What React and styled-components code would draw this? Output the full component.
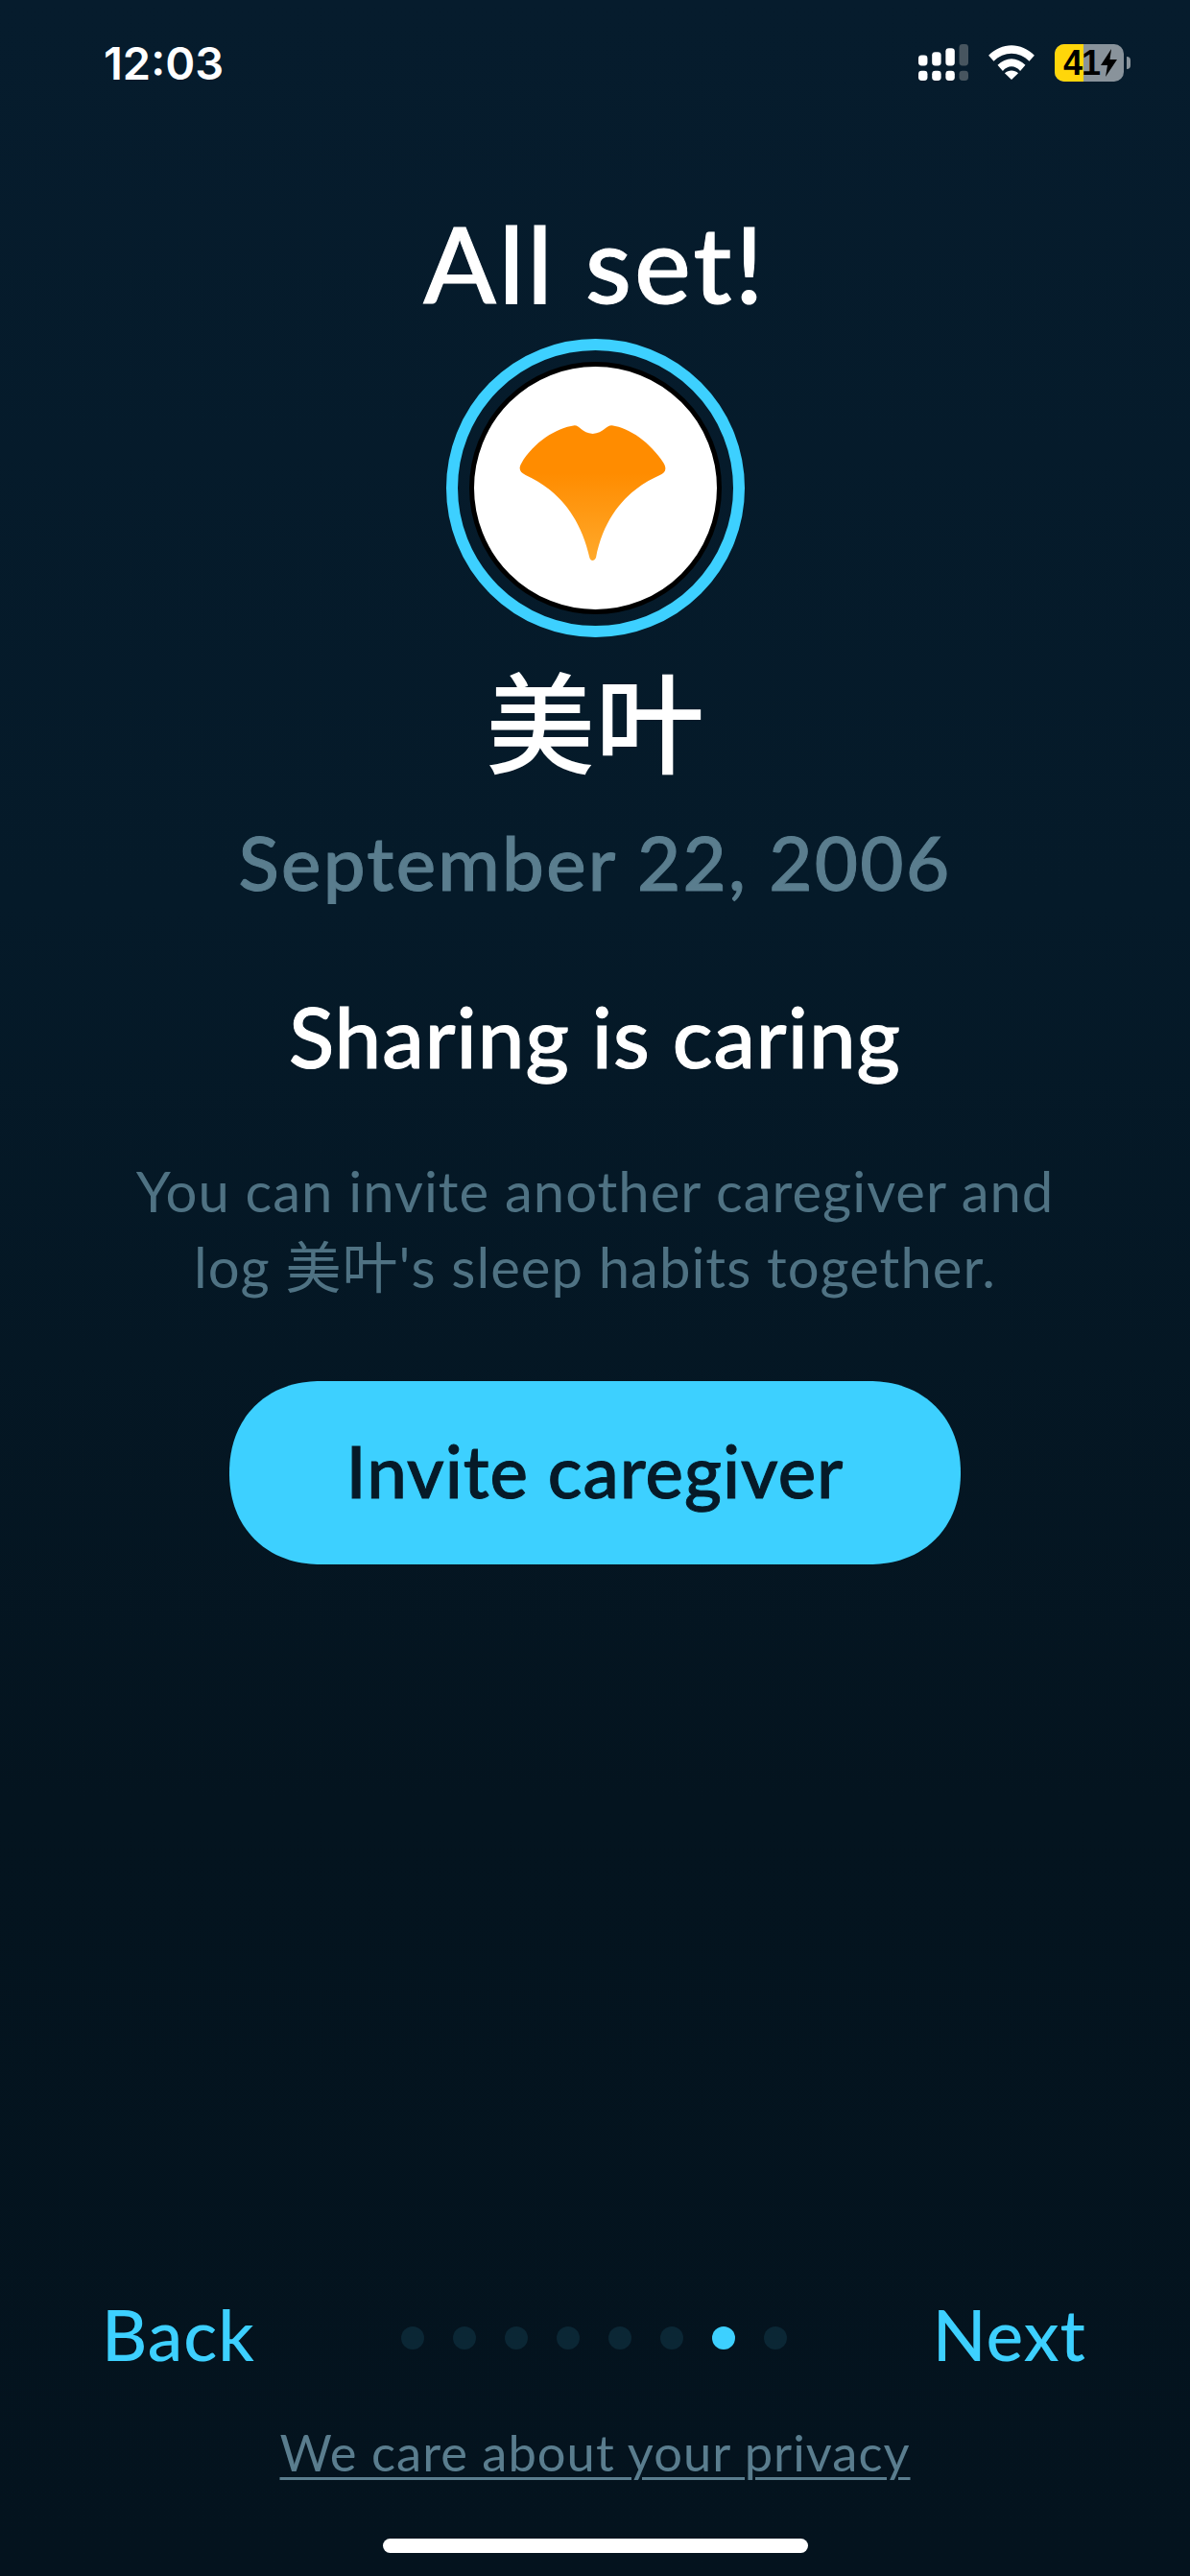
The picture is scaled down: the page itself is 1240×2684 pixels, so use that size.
import React from "react";
import styled, { createGlobalStyle } from "styled-components";

const accent = "#3dd0ff";
const muted = "#5a7d8e";

const GlobalStyle = createGlobalStyle`
  html, body {
    margin: 0;
    padding: 0;
    background: #04141f;
  }
  * {
    box-sizing: border-box;
  }
`;

const Screen = styled.div`
  width: 1240px;
  height: 2684px;
  display: flex;
  flex-direction: column;
  align-items: center;
  background: linear-gradient(180deg, #061c2d 0%, #051a29 35%, #04141f 70%, #04131e 100%);
  font-family: Lato, "Noto Sans CJK SC", sans-serif;
  overflow: hidden;
`;

const StatusBar = styled.div`
  width: 100%;
  height: 100px;
  padding: 38px 69px 0 108px;
  display: flex;
  align-items: flex-start;
  justify-content: space-between;
`;

const Clock = styled.div`
  font-family: Inter, sans-serif;
  font-size: 47px;
  font-weight: 600;
  line-height: 56px;
  color: #fff;
`;

const StatusIcons = styled.div`
  display: flex;
  align-items: center;
  height: 56px;
  margin-top: -1px;
`;

const Battery = styled.div`
  position: relative;
  width: 72px;
  height: 39px;
  margin-left: 21px;
  border-radius: 10px;
  background: #89939b;
  overflow: visible;
  display: flex;
  align-items: center;
  font-family: "Liberation Sans", sans-serif;
  font-size: 36px;
  font-weight: 700;
  color: #000;
  &::after {
    content: "";
    position: absolute;
    right: -7px;
    top: 13px;
    width: 4px;
    height: 13px;
    border-radius: 0 4px 4px 0;
    background: #89939b;
  }
`;

const BatteryFill = styled.div`
  position: absolute;
  left: 0;
  top: 0;
  bottom: 0;
  background: #ffd60a;
  border-radius: 10px 0 0 10px;
`;

const BatteryText = styled.span`
  position: relative;
  padding-left: 9px;
  letter-spacing: -1px;
  line-height: 39px;
`;

const BoltIcon = styled.svg`
  position: relative;
  margin-left: 1px;
`;

const Title = styled.h1`
  margin: 122px 0 0;
  font-size: 111px;
  font-weight: 500;
  line-height: 102px;
  letter-spacing: 3px;
  -webkit-text-stroke: 1px #fff;
  color: #fff;
`;

const AvatarRing = styled.div`
  width: 311px;
  height: 311px;
  margin-top: 29px;
  border-radius: 50%;
  border: 12px solid ${accent};
  display: flex;
  align-items: center;
  justify-content: center;
`;

const AvatarPhoto = styled.div`
  width: 263px;
  height: 263px;
  border-radius: 50%;
  border: 5px solid #000;
  background: #fff;
  display: flex;
`;

const ChildName = styled.div`
  margin-top: 19px;
  font-family: "Noto Sans CJK SC", sans-serif;
  font-size: 114px;
  font-weight: 500;
  line-height: 130px;
  color: #fff;
`;

const BirthDate = styled.div`
  margin-top: 42px;
  font-size: 78px;
  font-weight: 500;
  line-height: 86px;
  letter-spacing: 2.3px;
  -webkit-text-stroke: 1px ${muted};
  color: ${muted};
`;

const Heading = styled.h2`
  margin: 93px 0 0;
  font-size: 87px;
  font-weight: 500;
  line-height: 92px;
  letter-spacing: 1px;
  -webkit-text-stroke: 1px #fff;
  color: #fff;
`;

const Description = styled.p`
  margin: 76px 0 0;
  width: 1060px;
  text-align: center;
  font-size: 58px;
  font-weight: 400;
  line-height: 78.5px;
  letter-spacing: 1px;
  color: #4f7283;
`;

const InviteButton = styled.button`
  margin-top: 80px;
  width: 762px;
  height: 191px;
  padding-bottom: 6px;
  border: 0;
  border-radius: 95px;
  corner-shape: superellipse(1.1);
  background: ${accent};
  font-family: inherit;
  font-size: 74.5px;
  font-weight: 500;
  letter-spacing: 1px;
  -webkit-text-stroke: 1px #061a28;
  color: #061a28;
`;

const Footer = styled.div`
  margin-top: auto;
  width: 100%;
  display: flex;
  flex-direction: column;
  align-items: center;
`;

const NavRow = styled.div`
  width: 100%;
  padding: 0 108px 0 106px;
  display: flex;
  align-items: center;
  justify-content: space-between;
`;

const NavLink = styled.a`
  font-size: 73px;
  font-weight: 500;
  line-height: 84px;
  letter-spacing: 1px;
  color: ${accent};
`;

const Dots = styled.div`
  display: flex;
  gap: 30px;
  margin-top: 7px;
`;

const Dot = styled.span`
  width: 24px;
  height: 24px;
  border-radius: 50%;
  background: ${(p) => (p.$active ? accent : "#0b2735")};
`;

const PrivacyLink = styled.a`
  margin-top: 49px;
  font-size: 52.5px;
  font-weight: 400;
  line-height: 64px;
  letter-spacing: 1px;
  color: ${muted};
  text-decoration: underline;
  text-decoration-thickness: 3px;
  text-underline-offset: 6px;
`;

const HomeBar = styled.div`
  margin-top: 58px;
  margin-bottom: 24px;
  width: 443px;
  height: 15px;
  border-radius: 8px;
  background: #fff;
`;

const App = () => {
  const dots = [0, 1, 2, 3, 4, 5, 6, 7];
  return (
    <>
      <GlobalStyle />
      <Screen>
        <StatusBar>
          <Clock>12:03</Clock>
          <StatusIcons>
            <svg width="52" height="38" viewBox="82 56 154 112">
              <rect x="82" y="90" width="28" height="32" rx="10" fill="#fff" />
              <rect x="124" y="80" width="28" height="42" rx="10" fill="#fff" />
              <rect x="166" y="68" width="28" height="54" rx="10" fill="#fff" />
              <rect x="208" y="56" width="28" height="66" rx="10" fill="#47555f" />
              <rect x="82" y="138" width="28" height="30" rx="10" fill="#fff" />
              <rect x="124" y="138" width="28" height="30" rx="10" fill="#fff" />
              <rect x="166" y="138" width="28" height="30" rx="10" fill="#fff" />
              <rect x="208" y="138" width="28" height="30" rx="10" fill="#47555f" />
            </svg>
            <svg width="48" height="36" viewBox="300 58 142 107" style={{ marginLeft: 21 }}>
              <path
                d="M300 90 C340 48 402 48 442 90 L426 108 C395 76 347 76 316 108 Z"
                fill="#fff"
              />
              <path
                d="M328 120 C354 94 388 94 414 120 L398 138 C382 120 360 120 344 138 Z"
                fill="#fff"
              />
              <path d="M350 145 C362 134 380 134 392 145 L371 165 Z" fill="#fff" />
            </svg>
            <Battery>
              <BatteryFill style={{ width: "41%" }} />
              <BatteryText>41</BatteryText>
              <BoltIcon width="17" height="29" viewBox="0 0 17 29">
                <path d="M11 0 L0 17 H7 L5 29 L17 11 H9.5 Z" fill="#000" />
              </BoltIcon>
            </Battery>
          </StatusIcons>
        </StatusBar>
        <Title>All set!</Title>
        <AvatarRing>
          <AvatarPhoto>
            <svg width="253" height="253" viewBox="165 128 757 759">
              <defs>
                <linearGradient id="leaf" x1="0" y1="0" x2="0" y2="1">
                  <stop offset="0.35" stopColor="#ff8c00" />
                  <stop offset="1" stopColor="#ffa92b" />
                </linearGradient>
              </defs>
              <path
                d="M478 312 C495 312 500 335 535 338 C570 335 575 312 595 312 C650 320 715 365 757 430 C768 450 760 460 745 467 C670 500 575 570 545 725 C540 737 528 737 525 725 C495 590 420 510 325 467 C305 458 303 445 312 430 C350 365 420 320 478 312 Z"
                fill="url(#leaf)"
              />
            </svg>
          </AvatarPhoto>
        </AvatarRing>
        <ChildName>美叶</ChildName>
        <BirthDate>September 22, 2006</BirthDate>
        <Heading>Sharing is caring</Heading>
        <Description>
          You can invite another caregiver and
          <br />
          log 美叶's sleep habits together.
        </Description>
        <InviteButton>Invite caregiver</InviteButton>
        <Footer>
          <NavRow>
            <NavLink>Back</NavLink>
            <Dots>
              {dots.map((d) => (
                <Dot key={d} $active={d === 6} />
              ))}
            </Dots>
            <NavLink>Next</NavLink>
          </NavRow>
          <PrivacyLink>We care about your privacy</PrivacyLink>
          <HomeBar />
        </Footer>
      </Screen>
    </>
  );
};

export default App;
